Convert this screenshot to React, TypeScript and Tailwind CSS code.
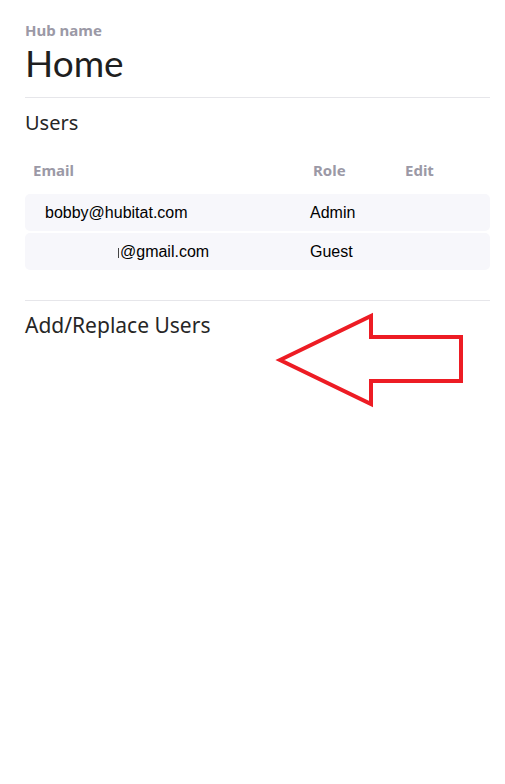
import React from 'react';

type HubUser = { email: string; role: string; pad?: string };

const users: HubUser[] = [
  { email: 'bobby@hubitat.com', role: 'Admin' },
  { email: '@gmail.com', role: 'Guest', pad: 'pl-[93px]' },
];

const App: React.FC = () => {
  return (
    <div className="relative min-h-[784px] bg-white pl-[25px] pr-[15px] pt-[20px] font-['Noto_Sans',sans-serif] text-[#222]">
      {/* Hub header */}
      <div className="text-[15px] font-bold leading-5 text-[#9b99a6]">Hub name</div>
      <h1 className="mt-[1px] font-['Lato',sans-serif] text-[37px] leading-[44px] text-[#1f1f1f]">Home</h1>
      <hr className="mt-[12px] border-[#e6e6ea]" />

      {/* Users */}
      <h2 className="mt-[11px] text-[20px] leading-7 text-[#262626]">Users</h2>
      <div className="mt-[23px] grid grid-cols-[280px_92px_1fr] px-2 text-[15px] font-bold leading-5 text-[#9b99a6]">
        <span>Email</span>
        <span>Role</span>
        <span>Edit</span>
      </div>
      <div className="mt-[14px] flex flex-col gap-[2px] font-['Liberation_Sans',Arial,sans-serif] text-[16px] text-black">
        {users.map((u) => (
          <div key={u.role} className="grid h-[37px] grid-cols-[285px_1fr] items-center rounded-[5px] bg-[#f7f7fb]">
            <span className={u.pad ?? 'pl-[20px]'}>
              {u.pad && <span className="mr-[1px] inline-block h-[10px] w-[1px] bg-[#444] align-[-1px]" />}
              {u.email}
            </span>
            <span>{u.role}</span>
          </div>
        ))}
      </div>

      <hr className="mt-[30px] border-[#e6e6ea]" />
      <h2 className="mt-[10px] text-[21px] leading-7 text-[#262626]">Add/Replace Users</h2>

      {/* annotation arrow */}
      <svg className="absolute left-0 top-0" width="505" height="784" viewBox="0 0 505 784" fill="none">
        <polygon
          points="280,360 371,316 371,337 461,337 461,381 371,381 371,404"
          stroke="#ed1c24"
          strokeWidth="4"
          strokeLinejoin="miter"
        />
      </svg>
    </div>
  );
};

export default App;
